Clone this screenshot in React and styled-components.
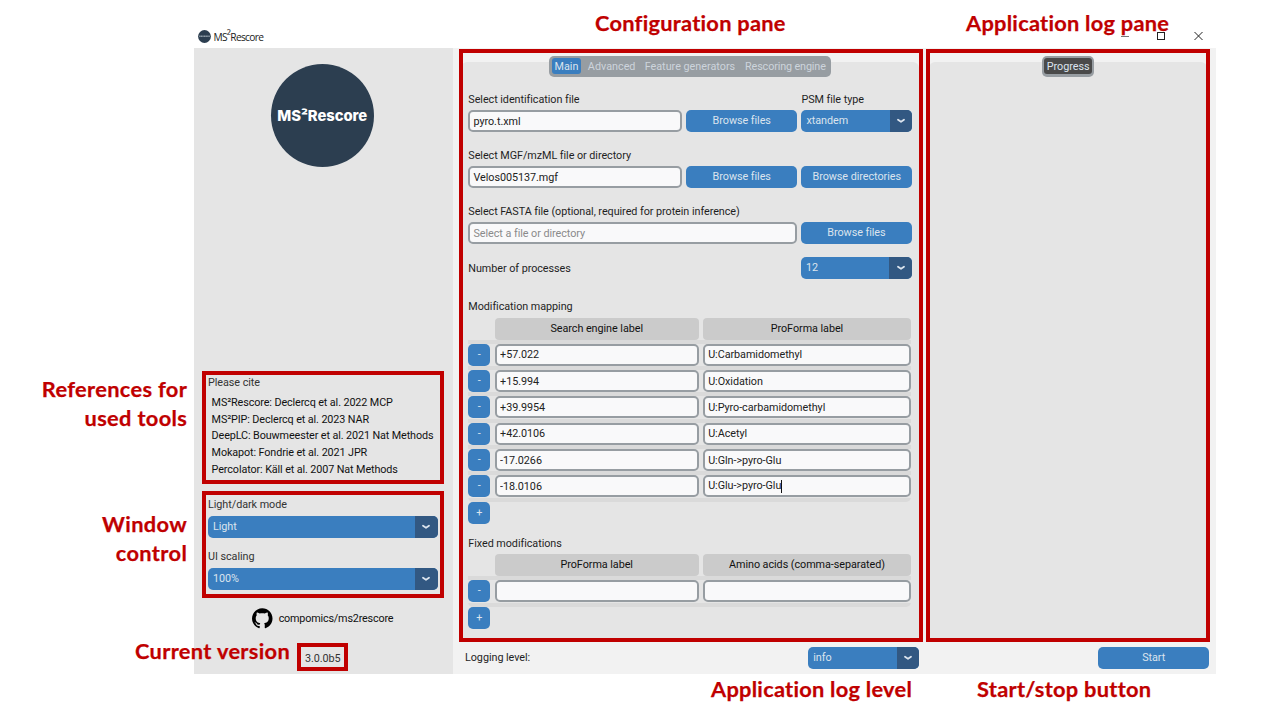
import React from "react";
import styled, { createGlobalStyle } from "styled-components";

const GlobalStyle = createGlobalStyle`
  *, *::before, *::after { box-sizing: border-box; }
  body { margin: 0; background: #ffffff; }
  button, input { font: inherit; letter-spacing: inherit; margin: 0; }
`;

const Stage = styled.div`
  position: relative;
  width: 1280px;
  height: 720px;
  overflow: hidden;
  padding: 24px 64px 46px 194px;
  background: #ffffff;
  font-family: Roboto, "Liberation Sans", sans-serif;
  font-size: 10.8px;
  line-height: 14px;
  letter-spacing: -0.05px;
  color: #1f1f1f;
`;

const Window = styled.div`
  display: flex;
  flex-direction: column;
  width: 1022px;
  height: 650px;
`;

const TitleBar = styled.header`
  display: flex;
  align-items: center;
  flex: none;
  height: 24px;
  padding: 0 13px 0 4px;
`;

const TitleIcon = styled.svg`
  width: 13px;
  height: 13px;
  margin-right: 2.5px;
`;

const Title = styled.span`
  flex: 1;
  padding-top: 1px;
  font-family: "Open Sans", sans-serif;
  font-size: 10.2px;
  letter-spacing: -0.7px;
  color: #222222;
`;

const Superscript = styled.span`
  position: relative;
  top: -1px;
  font-size: 12px;
  line-height: 0;
`;

const WindowButtons = styled.svg`
  width: 84px;
  height: 14px;
`;

const Body = styled.div`
  display: flex;
  flex: 1;
  min-height: 0;
`;

const Sidebar = styled.aside`
  display: flex;
  flex-direction: column;
  width: 259px;
  padding: 15.5px 15.5px 0 14px;
  background: #e5e5e5;
`;

const Logo = styled.div`
  display: flex;
  align-items: center;
  justify-content: center;
  flex: none;
  align-self: center;
  width: 103px;
  height: 103px;
  margin-bottom: 209px;
  padding: 1px 1px 0 0;
  border-radius: 50%;
  background: #2c3e50;
  color: #ffffff;
  font-family: Inter, sans-serif;
  font-size: 14.8px;
  font-weight: 800;
`;

const SideLabel = styled.div`
  height: 14px;
  margin-top: ${(p) => p.$top || 0}px;
  color: #333333;
`;

const CiteList = styled.ul`
  list-style: none;
  margin: 5.3px 0 0;
  padding: 0 0 0 3.6px;
  letter-spacing: -0.11px;
  color: #111111;
`;

const CiteItem = styled.li`
  height: 16.85px;
  line-height: 16.85px;
  white-space: nowrap;
`;

const Repo = styled.div`
  display: flex;
  align-items: center;
  justify-content: center;
  gap: 6px;
  height: 22px;
  margin-top: 17.5px;
  letter-spacing: -0.18px;
  color: #111111;
`;

const Version = styled.div`
  margin-top: 22px;
  text-align: center;
  color: #333333;
`;

const SelectBox = styled.button`
  display: flex;
  align-items: stretch;
  width: ${(p) => (p.$wide ? "229.5px" : "110.7px")};
  height: 22px;
  margin-top: ${(p) => p.$top || 0}px;
  padding: 0;
  border: 0;
  border-radius: 5px;
  overflow: hidden;
  background: #3a7ebf;
  color: #dce4ee;
`;

const SelectText = styled.span`
  flex: 1;
  padding-left: 5px;
  line-height: 22.6px;
  text-align: left;
`;

const SelectArrow = styled.span`
  display: flex;
  align-items: center;
  justify-content: center;
  width: 22.4px;
  background: #325882;
`;

const Main = styled.main`
  display: flex;
  flex-direction: column;
  flex: 1;
  padding: 0 7px 0 8px;
  background: #f2f2f2;
`;

const Panes = styled.div`
  display: flex;
  gap: 10px;
  height: 594px;
`;

const Pane = styled.section`
  display: flex;
  flex-direction: column;
  width: ${(p) => p.$width}px;
  padding: 8px 7px 0 7.3px;
  position: relative;
  z-index: 0;

  &::before {
    content: "";
    position: absolute;
    z-index: -1;
    inset: 14px 0 0 0;
    border-radius: 6px;
    background: #e5e5e5;
  }
`;

const Tabs = styled.nav`
  display: flex;
  align-self: center;
  height: 20.5px;
  padding: 2.3px;
  border-radius: 5px;
  background: #979da2;
`;

const Tab = styled.span`
  width: ${(p) => p.$width}px;
  padding-left: ${(p) => p.$pad}px;
  border-radius: 3px;
  line-height: 17.4px;
  letter-spacing: ${(p) => p.$track || 0}px;
  white-space: nowrap;
  background: ${(p) => p.$bg || "transparent"};
  color: ${(p) => (p.$bg ? "#dce4ee" : "#cdd4dc")};
`;

const FieldLabel = styled.div`
  height: 14px;
  line-height: 15.6px;
  white-space: nowrap;
`;

const FieldGrid = styled.div`
  display: grid;
  grid-template-columns: ${(p) => p.$columns};
  column-gap: 4.5px;
  row-gap: 4px;
  align-items: center;
  margin-top: ${(p) => p.$top}px;
`;

const Entry = styled.input`
  width: 100%;
  height: 22px;
  padding: 0 3.2px;
  border: 2px solid #979da2;
  border-radius: 5px;
  background: #f9f9fa;
  color: #222222;
  outline: none;
  &::placeholder { color: #8a8a8a; opacity: 1; }
`;

const ActiveEntry = styled.div`
  display: flex;
  align-items: center;
  height: 22px;
  padding: 0 3.2px;
  border: 2px solid #979da2;
  border-radius: 5px;
  background: #f9f9fa;
  color: #222222;
`;

const Caret = styled.span`
  width: 1px;
  height: 13px;
  background: #111111;
`;

const Button = styled.button`
  width: ${(p) => (p.$small ? "22px" : "110.7px")};
  height: 22px;
  padding: 0;
  border: 0;
  border-radius: 5px;
  background: #3a7ebf;
  color: #dce4ee;
  line-height: 22.6px;
  text-align: center;
`;

const Table = styled.div`
  display: flex;
  flex-direction: column;
  gap: 4px;
  width: 442.7px;
  margin-top: 4.3px;
  padding-bottom: 4px;
  border-radius: 5px;
  background: #dadada;
`;

const TableRow = styled.div`
  display: grid;
  grid-template-columns: 22.2px 203.7px 208px;
  column-gap: 4.4px;
  height: 22.27px;
  background: #e5e5e5;
`;

const HeadCell = styled.div`
  height: 22px;
  border-radius: 4px;
  line-height: 22.6px;
  text-align: center;
  color: #111111;
  background: #cbcbcb;
`;

const Footer = styled.footer`
  display: flex;
  align-items: center;
  height: 31px;
  padding-left: 4px;
`;

const FooterLabel = styled.span`
  width: 343.3px;
  padding-top: 1px;
`;

const FooterGap = styled.span`
  flex: 1;
`;

const Highlight = styled.div`
  position: absolute;
  left: ${(p) => p.$x}px;
  top: ${(p) => p.$y}px;
  width: ${(p) => p.$w}px;
  height: ${(p) => p.$h}px;
  border: 4px solid #c00000;
  pointer-events: none;
`;

const Callout = styled.div`
  position: absolute;
  top: ${(p) => p.$y}px;
  ${(p) => (p.$right ? `right: ${1280 - p.$right}px; text-align: right;` : `left: ${p.$x}px;`)}
  font-family: Lato, sans-serif;
  font-size: 21.8px;
  font-weight: 700;
  line-height: 29px;
  letter-spacing: ${(p) => p.$track || 0.26}px;
  -webkit-text-stroke: 0.25px #c00000;
  color: #c00000;
  white-space: pre;
`;

function Select({ value, wide, top }) {
  return (
    <SelectBox $wide={wide} $top={top}>
      <SelectText>{value}</SelectText>
      <SelectArrow>
        <svg width="8" height="6" viewBox="0 0 8 6" fill="none">
          <path d="M1 1.8 L4 3.8 L7 1.8" stroke="#dce4ee" strokeWidth="1.8" strokeLinecap="round" strokeLinejoin="round" />
        </svg>
      </SelectArrow>
    </SelectBox>
  );
}

function GithubMark() {
  return (
    <svg width="20.5" height="20.5" viewBox="0 0 24 24" fill="#000000">
      <path d="M12 .297c-6.63 0-12 5.373-12 12 0 5.303 3.438 9.8 8.205 11.385.6.113.82-.258.82-.577 0-.285-.01-1.04-.015-2.04-3.338.724-4.042-1.61-4.042-1.61C4.422 18.07 3.633 17.7 3.633 17.7c-1.087-.744.084-.729.084-.729 1.205.084 1.838 1.236 1.838 1.236 1.07 1.835 2.809 1.305 3.495.998.108-.776.417-1.305.76-1.605-2.665-.3-5.466-1.332-5.466-5.93 0-1.31.465-2.38 1.235-3.22-.135-.303-.54-1.523.105-3.176 0 0 1.005-.322 3.3 1.23.96-.267 1.98-.399 3-.405 1.02.006 2.04.138 3 .405 2.28-1.552 3.285-1.23 3.285-1.23.645 1.653.24 2.873.12 3.176.765.84 1.23 1.91 1.23 3.22 0 4.61-2.805 5.625-5.475 5.92.42.36.81 1.096.81 2.22 0 1.606-.015 2.896-.015 3.286 0 .315.21.69.825.57C20.565 22.092 24 17.592 24 12.297c0-6.627-5.373-12-12-12" />
    </svg>
  );
}

const citations = [
  "MS²Rescore: Declercq et al. 2022 MCP",
  "MS²PIP: Declercq et al. 2023 NAR",
  "DeepLC: Bouwmeester et al. 2021 Nat Methods",
  "Mokapot: Fondrie et al. 2021 JPR",
  "Percolator: Käll et al. 2007 Nat Methods",
];

const mappings = [
  ["+57.022", "U:Carbamidomethyl"],
  ["+15.994", "U:Oxidation"],
  ["+39.9954", "U:Pyro-carbamidomethyl"],
  ["+42.0106", "U:Acetyl"],
  ["-17.0266", "U:Gln->pyro-Glu"],
  ["-18.0106", "U:Glu->pyro-Glu"],
];

function ModTable({ heads, rows, active }) {
  return (
    <>
      <Table>
        <TableRow>
          <span />
          <HeadCell>{heads[0]}</HeadCell>
          <HeadCell>{heads[1]}</HeadCell>
        </TableRow>
        {rows.map(([left, right], i) => (
          <TableRow key={i}>
            <Button $small>-</Button>
            <Entry readOnly value={left} />
            {i === active ? (
              <ActiveEntry>
                {right}
                <Caret />
              </ActiveEntry>
            ) : (
              <Entry readOnly value={right} />
            )}
          </TableRow>
        ))}
      </Table>
      <Button $small>+</Button>
    </>
  );
}

export default function App() {
  return (
    <Stage>
      <GlobalStyle />
      <Window>
        <TitleBar>
          <TitleIcon viewBox="0 0 13 13">
            <circle cx="6.5" cy="6.5" r="6.4" fill="#2c3e50" />
            <path d="M1.2 6.3H11.8" stroke="#8e9ba6" strokeWidth="1.4" strokeDasharray="1.3 0.3" />
          </TitleIcon>
          <Title>MS<Superscript>²</Superscript>Rescore</Title>
          <WindowButtons viewBox="0 0 84 14" fill="none" stroke="#222222">
            <path d="M2 7.5h8" stroke="#777777" />
            <rect x="38.5" y="3.5" width="7" height="7" />
            <path d="M75.5 3l8 8M83.5 3l-8 8" />
          </WindowButtons>
        </TitleBar>
        <Body>
          <Sidebar>
            <Logo>MS²Rescore</Logo>
            <SideLabel>Please cite</SideLabel>
            <CiteList>
              {citations.map((c) => (
                <CiteItem key={c}>{c}</CiteItem>
              ))}
            </CiteList>
            <SideLabel $top={19.4}>Light/dark mode</SideLabel>
            <Select wide value="Light" top={3.8} />
            <SideLabel $top={12.1}>UI scaling</SideLabel>
            <Select wide value="100%" top={3.9} />
            <Repo>
              <GithubMark />
              compomics/ms2rescore
            </Repo>
            <Version>3.0.0b5</Version>
          </Sidebar>
          <Main>
            <Panes>
              <Pane $width={458}>
                <Tabs>
                  <Tab $bg="#3a7ebf" $width={29.3} $pad={3}>Main</Tab>
                  <Tab $width={59.2} $pad={7}>Advanced</Tab>
                  <Tab $width={100} $pad={4.6}>Feature generators</Tab>
                  <Tab $width={88.7} $pad={5} $track={-0.13}>Rescoring engine</Tab>
                </Tabs>
                <FieldGrid $columns="213.6px 110.5px 110.7px" $top={15.5}>
                  <FieldLabel>Select identification file</FieldLabel>
                  <span />
                  <FieldLabel>PSM file type</FieldLabel>
                  <Entry readOnly value="pyro.t.xml" />
                  <Button>Browse files</Button>
                  <Select value="xtandem" />
                </FieldGrid>
                <FieldGrid $columns="213.6px 110.5px 110.7px" $top={16.3}>
                  <FieldLabel>Select MGF/mzML file or directory</FieldLabel>
                  <span />
                  <span />
                  <Entry readOnly value="Velos005137.mgf" />
                  <Button>Browse files</Button>
                  <Button>Browse directories</Button>
                </FieldGrid>
                <FieldGrid $columns="328.3px 110.7px" $top={16.2}>
                  <FieldLabel>Select FASTA file (optional, required for protein inference)</FieldLabel>
                  <span />
                  <Entry readOnly placeholder="Select a file or directory" />
                  <Button>Browse files</Button>
                </FieldGrid>
                <FieldGrid $columns="328.3px 110.7px" $top={12.4}>
                  <FieldLabel>Number of processes</FieldLabel>
                  <Select value="12" />
                </FieldGrid>
                <FieldGrid $columns="1fr" $top={20.5}>
                  <FieldLabel>Modification mapping</FieldLabel>
                </FieldGrid>
                <ModTable heads={["Search engine label", "ProForma label"]} rows={mappings} active={5} />
                <FieldGrid $columns="1fr" $top={12.2}>
                  <FieldLabel>Fixed modifications</FieldLabel>
                </FieldGrid>
                <ModTable heads={["ProForma label", "Amino acids (comma-separated)"]} rows={[["", ""]]} />
              </Pane>
              <Pane $width={277.6}>
                <Tabs>
                  <Tab $bg="#4a4a4a" $width={48} $pad={2.9} $track={-0.05}>Progress</Tab>
                </Tabs>
              </Pane>
            </Panes>
            <Footer>
              <FooterLabel>Logging level:</FooterLabel>
              <Select value="info" />
              <FooterGap />
              <Button>Start</Button>
            </Footer>
          </Main>
        </Body>
      </Window>

      <Highlight $x={202} $y={371} $w={242} $h={113} />
      <Highlight $x={202} $y={491} $w={242} $h={107} />
      <Highlight $x={297} $y={643} $w={51} $h={28} />
      <Highlight $x={459} $y={49} $w={464} $h={593} />
      <Highlight $x={926} $y={49} $w={284} $h={593} />

      <Callout $x={595} $y={8}>Configuration pane</Callout>
      <Callout $x={966} $y={8}>Application log pane</Callout>
      <Callout $right={187.2} $y={374} $track={0.34}>{"References for\nused tools"}</Callout>
      <Callout $right={187.2} $y={509} $track={0.38}>{"Window\ncontrol"}</Callout>
      <Callout $x={135} $y={636} $track={0.34}>Current version</Callout>
      <Callout $x={711} $y={674}>Application log level</Callout>
      <Callout $x={977} $y={674} $track={0.28}>Start/stop button</Callout>
    </Stage>
  );
}
